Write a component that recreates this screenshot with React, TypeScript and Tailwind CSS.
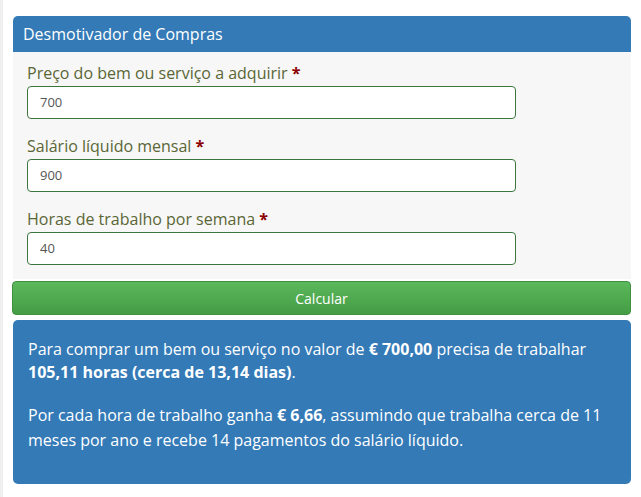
import React from "react";

const fields = [
  { label: "Preço do bem ou serviço a adquirir", value: "700" },
  { label: "Salário líquido mensal", value: "900" },
  { label: "Horas de trabalho por semana", value: "40" },
];

export default function App() {
  return (
    <div className="min-h-[497px] border-l-[3px] border-[#efefef] bg-white font-['Open_Sans',sans-serif]">
      <div className="pt-4 pl-[10px] pr-[10px]">
        {/* form panel */}
        <div className="bg-[#f7f7f7]">
          <div className="h-9 rounded-t-[5px] bg-[#337ab7] px-[10px] flex items-center text-[16px] text-white">
            Desmotivador de Compras
          </div>
          <div className="pl-[14px] pr-[115px] pt-[9px] pb-[14px] flex flex-col">
            {fields.map((f, i) => (
              <div key={i} className={i > 0 ? "mt-[15px]" : ""}>
                <label className="block text-[16px] leading-6 mb-[1px] text-[#5a6636]">
                  {f.label} <span className="font-bold text-[#8b0000]">*</span>
                </label>
                <div className="h-[33px] rounded-[4px] border border-[#3c763d] bg-white pl-3 flex items-center text-[13px] text-[#555]">
                  {f.value}
                </div>
              </div>
            ))}
          </div>
        </div>

        <button className="mt-[2px] -ml-px w-[calc(100%+1px)] h-[34px] rounded-[4px] border border-[#3e8f3e] bg-gradient-to-b from-[#5cb85c] to-[#449d44] text-[14px] text-white">
          Calcular
        </button>

        <div className="mt-[5px] h-[164px] rounded-[5px] bg-[#337ab7] px-[15px] pt-[18px] text-[16px] leading-[23px] text-white">
          <p>
            Para comprar um bem ou serviço no valor de <b>€ 700,00</b> precisa de trabalhar{" "}
            <b>105,11 horas (cerca de 13,14 dias)</b>.
          </p>
          <p className="mt-[19px] leading-[25px]">
            Por cada hora de trabalho ganha <b>€ 6,66</b>, assumindo que trabalha cerca de 11
            meses por ano e recebe 14 pagamentos do salário líquido.
          </p>
        </div>
      </div>
    </div>
  );
}
